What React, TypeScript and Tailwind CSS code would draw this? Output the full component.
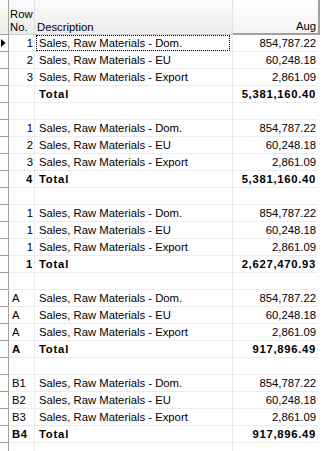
import React from "react";

type Row = { no: string; desc: string; amt: string; total?: boolean; blank?: boolean; alignLeft?: boolean };

const sections: { nos: string[]; total: string; totalNo: string; left?: boolean }[] = [
  { nos: ["1", "2", "3"], totalNo: "", total: "5,381,160.40" },
  { nos: ["1", "2", "3"], totalNo: "4", total: "5,381,160.40" },
  { nos: ["1", "1", "1"], totalNo: "1", total: "2,627,470.93" },
  { nos: ["A", "A", "A"], totalNo: "A", total: "917,896.49", left: true },
  { nos: ["B1", "B2", "B3"], totalNo: "B4", total: "917,896.49", left: true },
];

const descs = ["Sales, Raw Materials - Dom.", "Sales, Raw Materials - EU", "Sales, Raw Materials - Export"];
const amts = ["854,787.22", "60,248.18", "2,861.09"];

const rows: Row[] = [];
sections.forEach((s) => {
  s.nos.forEach((n, i) => rows.push({ no: n, desc: descs[i], amt: amts[i], alignLeft: s.left }));
  rows.push({ no: s.totalNo, desc: "Total", amt: s.total, total: true, alignLeft: s.left });
  rows.push({ no: "", desc: "", amt: "", blank: true });
});

export default function App() {
  return (
    <div
      className="w-[328px] h-[451px] overflow-hidden bg-white text-black text-[11.3px] leading-[16px]"
      style={{ fontFamily: '"Liberation Sans", Arial, sans-serif' }}
    >
      {/* header */}
      <div className="flex h-[35px]">
        <div className="w-[9px] shrink-0 border-r border-b border-[#a0a0a0] bg-gradient-to-b from-[#fbfbfb] to-[#ececec]" />
        <div className="w-[26px] shrink-0 border-r border-b border-r-[#e2e2e2] border-b-[#d0d0d0] bg-gradient-to-b from-[#fbfbfb] to-[#ececec] flex flex-col justify-end pl-[1px] pb-0 leading-[13px]">
          <span>Row</span>
          <span>No.</span>
        </div>
        <div className="w-[198px] shrink-0 border-r border-b border-r-[#e2e2e2] border-b-[#d0d0d0] bg-gradient-to-b from-[#fbfbfb] to-[#ececec] flex items-end pl-[2px] pb-0 leading-[13px]">
          Description
        </div>
        <div className="w-[87px] shrink-0 border-r-2 border-b-2 border-[#a0a0a0] bg-gradient-to-b from-[#ffffff] to-[#f3f3f3] flex items-end justify-end pr-[2px] pb-0 leading-[13px]">
          Aug
        </div>
        <div className="flex-1 bg-white" />
      </div>
      {/* rows */}
      {rows.map((r, i) => (
        <div key={i} className="flex h-[17px]">
          <div className="w-[9px] shrink-0 border-r border-b border-[#a0a0a0] bg-[#fdfdfd] flex items-center justify-start pl-[1px]">
            {i === 0 && (
              <svg width="5" height="8" viewBox="0 0 5 8">
                <path d="M0 0 L4.5 4 L0 8 Z" fill="#000" />
              </svg>
            )}
          </div>
          <div
            className={`w-[26px] shrink-0 border-r border-b border-[#ececec] flex items-center ${
              r.alignLeft ? "justify-start pl-[3px]" : "justify-end pr-[1px]"
            } ${r.total ? "font-bold tracking-[0.6px]" : ""}`}
          >
            {r.no}
          </div>
          <div className="w-[198px] shrink-0 border-r border-b border-[#ececec] flex items-center">
            <div
              className={`h-[16px] w-[194px] ml-[1px] pl-[2px] flex items-center ${
                i === 0 ? "border border-dotted border-black" : "border border-transparent"
              } ${r.total ? "font-bold tracking-[0.8px]" : ""}`}
            >
              {r.desc}
            </div>
          </div>
          <div
            className={`w-[85px] shrink-0 border-b border-[#ececec] flex items-center justify-end pr-[2px] ${
              r.total ? "font-bold tracking-[0.7px]" : ""
            }`}
          >
            {r.amt}
          </div>
          <div className="flex-1 bg-white" />
        </div>
      ))}
    </div>
  );
}
